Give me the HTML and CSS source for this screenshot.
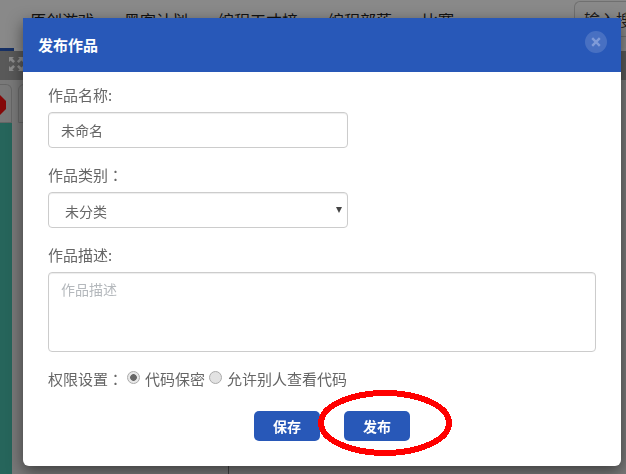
FILE: index.html
```html
<!DOCTYPE html>
<html lang="zh">
<head>
<meta charset="utf-8">
<title>发布作品</title>
<link rel="stylesheet" href="styles.css">
</head>
<body>
<div class="page">
  <header class="topbar">
    <nav class="nav">
      <span class="nav-item">原创游戏</span>
      <span class="nav-item">黑客计划</span>
      <span class="nav-item">编程工才榜</span>
      <span class="nav-item">编程部落</span>
      <span class="nav-item">比赛</span>
    </nav>
    <div class="search">输入搜</div>
  </header>
  <div class="underline"></div>
  <div class="toolbar">
    <svg class="expand" viewBox="0 0 14 14" width="14" height="14"><path d="M0 0h5L3.4 1.6 6 4.2 4.2 6 1.6 3.4 0 5zM14 0v5l-1.6-1.6L9.8 6 8 4.2l2.6-2.6L9 0zM0 14V9l1.6 1.6L4.2 8 6 9.8l-2.6 2.6L5 14zM14 14H9l1.6-1.6L8 9.8 9.8 8l2.6 2.6L14 9z" fill="#fff"/></svg>
  </div>
  <div class="workspace">
    <aside class="palette">
      <div class="tiles">
        <div class="tile"><svg class="stop" viewBox="0 0 20 20" width="20" height="20"><polygon points="6,0 14,0 20,6 20,14 14,20 6,20 0,14 0,6" fill="#f01010"/></svg></div>
        <div class="tile"></div>
      </div>
      <div class="stage-row">
        <div class="stage"></div>
        <div class="stage-side"></div>
      </div>
    </aside>
    <div class="code-area"></div>
  </div>
</div>

<div class="overlay"></div>

<section class="modal">
  <div class="modal-header">
    <h2 class="modal-title">发布作品</h2>
    <button class="modal-close" type="button" aria-label="关闭">
      <svg viewBox="0 0 10 10" width="10" height="10"><path d="M1.2 1.2l7.6 7.6M8.8 1.2L1.2 8.8" stroke="#7f9bd8" stroke-width="2.4" fill="none"/></svg>
    </button>
  </div>
  <form class="modal-body">
    <div class="field">
      <label class="label">作品名称:</label>
      <input class="control control-short" type="text" value="未命名">
    </div>
    <div class="field">
      <label class="label">作品类别<span class="colon" lang="zh-TW">：</span></label>
      <div class="select control control-short">
        <span class="select-value">未分类</span>
        <span class="select-arrow"></span>
      </div>
    </div>
    <div class="field">
      <label class="label">作品描述:</label>
      <textarea class="control control-area" placeholder="作品描述"></textarea>
    </div>
    <div class="perm">
      <span>权限设置<span class="colon" lang="zh-TW">：</span></span>
      <input class="radio" type="radio" name="perm" checked>
      <span>代码保密</span>
      <input class="radio" type="radio" name="perm">
      <span>允许别人查看代码</span>
    </div>
    <div class="actions">
      <button class="btn" type="button">保存</button>
      <button class="btn" type="button">发布</button>
    </div>
  </form>
</section>

<svg class="annotation" width="140" height="72" viewBox="0 0 140 72">
  <ellipse cx="70" cy="36" rx="64" ry="30" fill="none" stroke="#ff0000" stroke-width="6" shape-rendering="crispEdges"/>
</svg>
</body>
</html>
```
FILE: styles.css
```css
* { box-sizing: border-box; }
html, body { margin: 0; height: 100%; overflow: hidden; }
body {
  font-family: "Noto Sans CJK SC", "Liberation Sans", sans-serif;
  font-size: 15px;
  color: #666;
  background: #fff;
}

/* page behind the dialog */
.page { height: 474px; display: flex; flex-direction: column; }
.topbar {
  height: 48px;
  flex: none;
  background: #fafafa;
  display: flex;
  justify-content: space-between;
  padding-left: 30px;
}
.nav { display: flex; gap: 30px; padding-top: 9px; font-size: 16px; color: #222; white-space: nowrap; }
.nav-item { line-height: 22px; }
.search {
  width: 52px;
  height: 36px;
  margin-top: 1px;
  border: 1px solid #ccc;
  border-right: 0;
  border-radius: 6px 0 0 6px;
  padding: 6px 0 0 9px;
  font-size: 16px;
  line-height: 22px;
  color: #333;
  white-space: nowrap;
  overflow: hidden;
}
.underline { height: 3px; flex: none; width: 14px; background: #2858b8; }
.toolbar { height: 29px; flex: none; background: #a3a3a3; padding: 6px 0 0 9px; }
.expand { display: block; }
.workspace { flex: 1; display: flex; min-height: 0; }
.palette { width: 229px; flex: none; border-right: 1px solid #777; display: flex; flex-direction: column; background: #dcdcdc; }
.tiles { height: 43px; flex: none; display: flex; gap: 6px; }
.tile { width: 12px; margin-top: 4px; padding-top: 10px; border: 1px solid #bbb; border-left: 0; border-radius: 0 6px 0 0; overflow: hidden; }
.tile + .tile { width: 40px; border-left: 1px solid #bbb; border-radius: 6px 6px 0 0; }
.stop { display: block; margin-left: -14px; }
.stage-row { flex: 1; display: flex; gap: 6px; }
.stage { width: 12px; background: #45b9a7; }
.stage-side { flex: 1; background: #dcdcdc; }
.code-area { flex: 1; background: #dcdcdc; }

.overlay { position: fixed; inset: 0; background: rgba(0, 0, 0, 0.45); }

/* dialog */
.modal {
  position: absolute;
  left: 23px;
  top: 18px;
  width: 598px;
  height: 448px;
  background: #fff;
  border-radius: 0 0 6px 6px;
  box-shadow: 0 5px 15px rgba(0, 0, 0, 0.5);
  display: flex;
  flex-direction: column;
}
.modal-header {
  height: 54px;
  flex: none;
  background: #2858b8;
  display: flex;
  align-items: center;
  justify-content: space-between;
  padding: 0 14px 0 15px;
  color: #fff;
}
.modal-title { margin: 0; font-size: 15px; font-weight: 700; line-height: 20px; }
.modal-close {
  width: 22px;
  height: 22px;
  margin-top: -6px;
  padding: 0;
  border: 0;
  border-radius: 50%;
  background: rgba(255, 255, 255, 0.15);
  display: flex;
  align-items: center;
  justify-content: center;
}
.modal-body { padding: 13px 25px 0; flex: 1; display: flex; flex-direction: column; }
.field { display: flex; flex-direction: column; align-items: flex-start; margin-bottom: 17px; }
.label { display: block; height: 20px; line-height: 20px; margin-bottom: 7px; }
.colon { font-family: "Noto Sans CJK TC", "Noto Sans CJK SC", sans-serif; line-height: 1; }
.control {
  border: 1px solid #ccc;
  border-radius: 4px;
  background: #fff;
  font: inherit;
  font-size: 14px;
  color: #666;
  box-shadow: inset 0 1px 1px rgba(0, 0, 0, 0.075);
  outline: none;
}
.control-short { width: 300px; height: 36px; flex: none; padding: 0 12px; }
.control-area {
  width: 548px;
  height: 80px;
  padding: 6px 12px;
  resize: none;
  display: block;
}
.control-area::placeholder { color: #b4b8bc; opacity: 1; }
.select { display: flex; align-items: center; justify-content: space-between; padding: 0 5px 0 16px; }
.select-value { line-height: 20px; padding-top: 2px; }
.select-arrow { width: 0; height: 0; border-left: 3.5px solid transparent; border-right: 3.5px solid transparent; border-top: 6px solid #444; }
.perm { display: flex; align-items: center; height: 20px; margin-top: -1px; white-space: nowrap; }
.radio {
  appearance: none;
  width: 13px;
  height: 13px;
  margin: 0 5px 0 4px;
  border: 1px solid #aaa;
  border-radius: 50%;
  background: #e2e2e2;
  flex: none;
  position: relative;
  top: -1px;
}
.radio:checked { background: radial-gradient(circle, #666 0 3px, #e8e8e8 3.7px); }
.actions { display: flex; justify-content: center; gap: 24px; margin-top: 23px; padding-left: 20px; }
.btn {
  width: 66px;
  height: 30px;
  border: 0;
  border-radius: 5px;
  background: #2858b8;
  color: #fff;
  font: 700 14px/30px "Noto Sans CJK SC", sans-serif;
  padding: 0;
}

/* red hand-drawn marker over the publish button */
.annotation { position: absolute; left: 315px; top: 387px; }
```
